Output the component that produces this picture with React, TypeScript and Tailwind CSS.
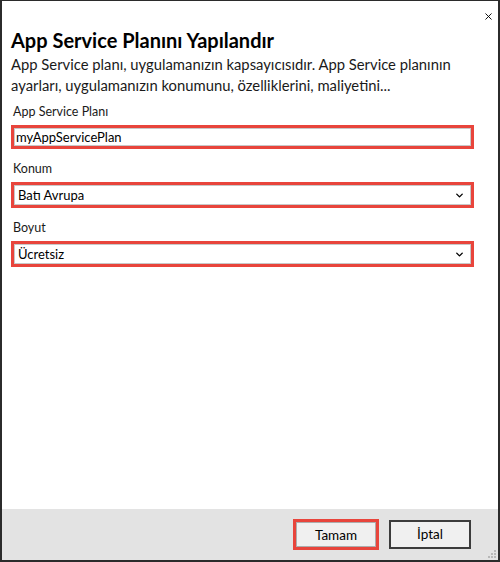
import { ChevronDown, X } from "lucide-react";

const FONT = "font-['Lato','Open_Sans',sans-serif]";

function Field({
  label,
  value,
  select,
}: {
  label: string;
  value: string;
  select?: boolean;
}) {
  return (
    <div className="flex flex-col">
      <span className="pl-[2px] text-[12.5px] leading-[16px] text-[#1a1a1a]">{label}</span>
      <div className="mt-[5px] border-[3px] border-[#e8453c]">
        <div
          className={
            select
              ? "flex h-[20px] items-center justify-between border border-[#c8c8c8] bg-white pl-[3px] pr-[5px]"
              : "flex h-[18px] items-center border border-[#c8c8c8] bg-white pl-[1px]"
          }
        >
          <span className="text-[13px] leading-none text-black">{value}</span>
          {select && <ChevronDown className="size-[11px] text-black" strokeWidth={3} />}
        </div>
      </div>
    </div>
  );
}

export default function App() {
  return (
    <div
      className={`${FONT} flex h-[562px] w-[500px] flex-col border-x-2 border-t border-b-2 border-[#2b2b2b] bg-white`}
    >
      <div className="flex justify-end pr-[4px] pt-[10px]">
        <X className="size-[11px] text-black" strokeWidth={2} />
      </div>
      <div className="flex flex-1 flex-col px-[9px]">
        <h1 className="mt-[6px] text-[20px] font-bold leading-[24px] text-black">
          App Service Planını Yapılandır
        </h1>
        <p className="mt-[2px] text-[14.8px] leading-[21px] text-[#1a1a1a]">
          App Service planı, uygulamanızın kapsayıcısıdır. App Service planının
          ayarları, uygulamanızın konumunu, özelliklerini, maliyetini...
        </p>
        <div className="mt-[8px] flex w-[463px] flex-col gap-[12px]">
          <Field label="App Service Planı" value="myAppServicePlan" />
          <Field label="Konum" value="Batı Avrupa" select />
          <Field label="Boyut" value="Ücretsiz" select />
        </div>
      </div>
      <div className="relative flex h-[51px] items-center justify-end gap-[10px] bg-[#e3e3e3] pr-[27px]">
        <div className="border-[3px] border-[#e8453c]">
          <button className="h-[25px] w-[80px] border border-[#adadad] bg-[#f0f0f0] text-[13.5px] text-black">
            Tamam
          </button>
        </div>
        <button className="h-[29px] w-[82px] border-2 border-[#3c3c3c] bg-[#f0f0f0] text-[13.5px] text-black">
          İptal
        </button>
        <div className="absolute bottom-[2px] right-[2px] grid grid-cols-3 gap-[1px]">
          {[0, 0, 1, 0, 1, 1, 1, 1, 1].map((v, i) => (
            <span key={i} className={v ? "size-[2px] bg-[#b8b8b8]" : "size-[2px]"} />
          ))}
        </div>
      </div>
    </div>
  );
}
